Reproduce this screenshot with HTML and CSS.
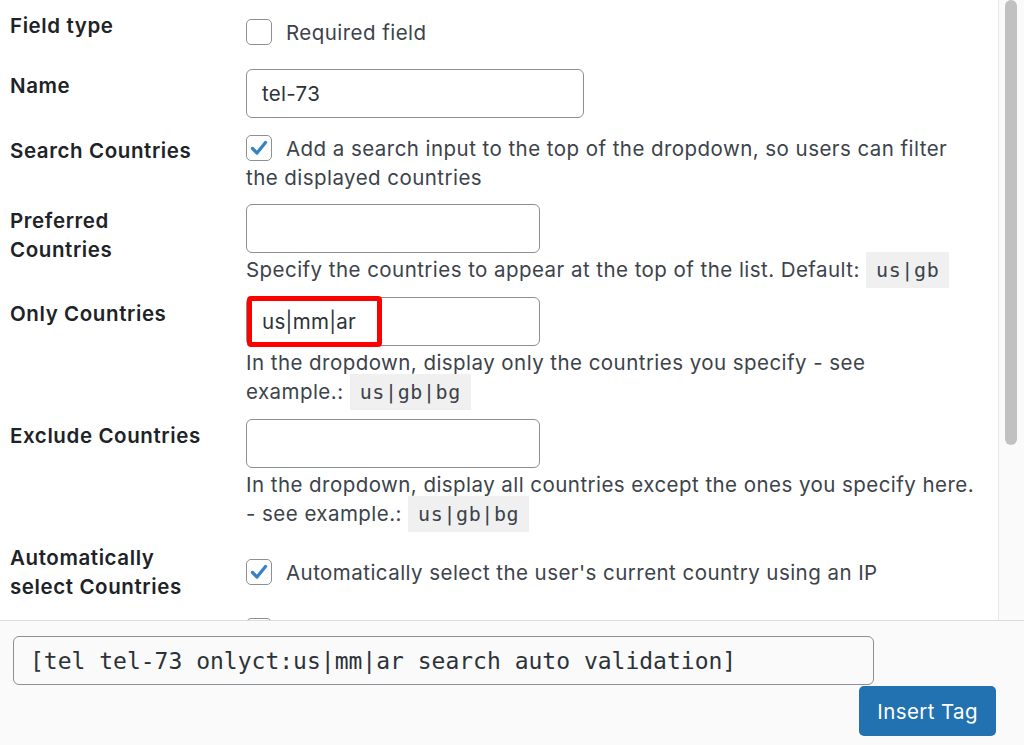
FILE: index.html
```html
<!DOCTYPE html>
<html lang="en">
<head>
  <meta charset="UTF-8" />
  <meta name="viewport" content="width=device-width, initial-scale=1" />
  <title>Form-tag Generator: tel</title>
  <link rel="stylesheet" href="styles.css">
</head>
<body>
  <div class="dialog">
    <div class="dialog-body">
      <div class="control-box">
        <table class="form-table">
          <colgroup><col class="col-label"><col></colgroup>
          <tr class="first-row">
            <th>Field type</th>
            <td><label class="check-line"><span class="check"></span>Required field</label></td>
          </tr>
          <tr>
            <th><label for="tag-name">Name</label></th>
            <td><input type="text" id="tag-name" class="text-input name-input" value="tel-73" /></td>
          </tr>
          <tr>
            <th>Search Countries</th>
            <td><label class="check-line"><span class="check is-on"><svg viewBox="0 0 24 24"><path d="M5.5 12.5l4.5 4.5 8.5-10.5" /></svg></span>Add a search input to the top of the dropdown, so users can filter the displayed countries</label></td>
          </tr>
          <tr>
            <th><label for="tag-preferred">Preferred Countries</label></th>
            <td>
              <input type="text" id="tag-preferred" class="text-input" />
              <p class="description">Specify the countries to appear at the top of the list. Default: <code>us|gb</code></p>
            </td>
          </tr>
          <tr>
            <th><label for="tag-only">Only Countries</label></th>
            <td>
              <div class="marked">
                <input type="text" id="tag-only" class="text-input" value="us|mm|ar" />
                <span class="mark"></span>
              </div>
              <p class="description">In the dropdown, display only the countries you specify - see <span class="nowrap">example.: <code>us|gb|bg</code></span></p>
            </td>
          </tr>
          <tr>
            <th><label for="tag-exclude">Exclude Countries</label></th>
            <td>
              <input type="text" id="tag-exclude" class="text-input" />
              <p class="description">In the dropdown, display all countries except the ones you specify here. <span class="nowrap">- see example.: <code>us|gb|bg</code></span></p>
            </td>
          </tr>
          <tr>
            <th>Automatically select Countries</th>
            <td><label class="check-line"><span class="check is-on"><svg viewBox="0 0 24 24"><path d="M5.5 12.5l4.5 4.5 8.5-10.5" /></svg></span>Automatically select the user's current country using an IP</label></td>
          </tr>
          <tr>
            <th>Validation</th>
            <td><label class="check-line"><span class="check"></span>Enable validation of the phone number</label></td>
          </tr>
          <tr>
            <th><label for="tag-id">Id attribute</label></th>
            <td><input type="text" id="tag-id" class="text-input" /></td>
          </tr>
        </table>
      </div>
      <div class="scrollbar"><div class="scrollbar-thumb"></div></div>
    </div>

    <div class="insert-box">
      <input type="text" class="tag-code" readonly value="[tel tel-73 onlyct:us|mm|ar search auto validation]" />
      <div class="submitbox">
        <button type="button" class="button-primary">Insert Tag</button>
      </div>
    </div>
  </div>
</body>
</html>
```

FILE: styles.css
```css
* {
  box-sizing: border-box;
}
body {
  margin: 0;
  font-family: Inter, 'Noto Sans', sans-serif;
  font-size: 20.5px;
  letter-spacing: 0.45px;
  line-height: 29px;
  color: #3c434a;
  background: #fff;
}
.dialog {
  height: 745px;
  display: flex;
  flex-direction: column;
}
.dialog-body {
  height: 620px;
  flex: none;
  display: flex;
}
.control-box {
  flex: 1;
  overflow: hidden;
  padding-top: 2px;
}
.scrollbar {
  width: 26px;
  padding: 0 7px 0 6px;
  background: #fafafa;
  border-left: 1px solid #e8e8e8;
}
.scrollbar-thumb {
  height: 445px;
  background: #c1c1c1;
  border-radius: 6px;
}
.form-table {
  width: 100%;
  border-collapse: collapse;
  table-layout: fixed;
}
.col-label {
  width: 246px;
}
.form-table th {
  padding: 8px 30px 8px 10px;
  text-align: left;
  vertical-align: top;
  font-weight: 600;
  letter-spacing: 0.6px;
  color: #1d2327;
}
.form-table td {
  padding: 6px 16px 6px 0;
  vertical-align: middle;
}
.form-table tr.first-row {
  height: 61px;
}
.form-table tr.first-row th {
  padding-top: 9px;
}
.check-line {
  display: block;
}
.check {
  display: inline-block;
  width: 26px;
  height: 26px;
  margin-right: 14px;
  vertical-align: -5px;
  border: 1.5px solid #8c8f94;
  border-radius: 5px;
  background: #fff;
}
.check svg {
  display: block;
  width: 100%;
  height: 100%;
}
.check path {
  fill: none;
  stroke: #3582c4;
  stroke-width: 3.2;
  stroke-linecap: round;
  stroke-linejoin: round;
}
.text-input {
  display: block;
  width: 294px;
  height: 49px;
  padding: 0 15px;
  border: 1px solid #8c8f94;
  border-radius: 6px;
  font-family: inherit;
  font-size: 20.5px;
  letter-spacing: 0.3px;
  color: #2c3338;
  background: #fff;
}
.name-input {
  width: 338px;
  margin-bottom: 4px;
}
.description {
  margin: 2px 0 0;
}
.nowrap {
  white-space: nowrap;
}
code {
  font-family: 'DejaVu Sans Mono', monospace;
  font-size: 20px;
  letter-spacing: 0.6px;
  padding: 6px 10px;
  background: #f0f0f1;
  color: #3c434a;
}
.marked {
  position: relative;
}
.mark {
  position: absolute;
  left: 1px;
  top: -1px;
  width: 135px;
  height: 51px;
  border: 5px solid #ff0000;
  border-radius: 4px;
}
.insert-box {
  flex: 1;
  background: #fafafa;
  border-top: 1px solid #dcdcde;
  padding: 15px 28px 0 13px;
}
.tag-code {
  display: block;
  width: 861px;
  height: 49px;
  padding: 0 16px;
  border: 1px solid #8c8f94;
  border-radius: 6px;
  font-family: 'DejaVu Sans Mono', monospace;
  font-size: 23px;
  letter-spacing: 0;
  color: #2c3338;
  background: #fafafa;
}
.submitbox {
  display: flex;
  justify-content: flex-end;
}
.button-primary {
  height: 50px;
  margin-top: 1px;
  padding: 0 18px;
  border: none;
  border-radius: 5px;
  background: #2271b1;
  color: #fff;
  font-family: Inter, sans-serif;
  font-size: 20.5px;
  letter-spacing: 0.4px;
  cursor: pointer;
}
.button-primary:hover {
  background: #135e96;
}
```
